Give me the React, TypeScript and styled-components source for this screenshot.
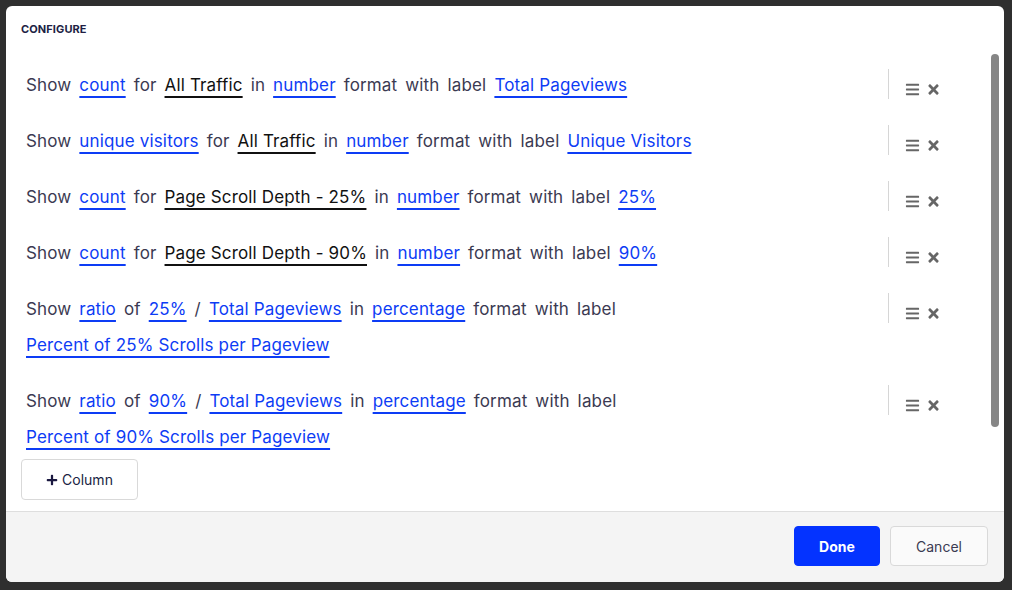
import React from "react";
import styled, { createGlobalStyle } from "styled-components";
import { FaBars, FaTimes, FaPlus } from "react-icons/fa";

const Global = createGlobalStyle`
  html, body { margin: 0; padding: 0; }
  body { font-family: Inter, "Noto Sans", sans-serif; background: #2f2f2f; }
  * { box-sizing: border-box; }
`;

const Backdrop = styled.div`
  width: 1012px;
  height: 590px;
  background: #2f2f2f;
  padding: 6px 8px 8px 6px;
  overflow: hidden;
`;

const Modal = styled.div`
  width: 998px;
  height: 576px;
  background: #ffffff;
  border-radius: 6px;
  display: flex;
  flex-direction: column;
  overflow: hidden;
`;

const Header = styled.div`
  height: 44px;
  padding: 16px 15px 0;
  font-size: 11px;
  line-height: 14px;
  font-weight: 700;
  color: #201e44;
  letter-spacing: 0.1px;
`;

const Body = styled.div`
  flex: 1;
  position: relative;
  padding: 17px 64px 10px 15px;
  display: flex;
  flex-direction: column;
`;

const Scrollbar = styled.div`
  position: absolute;
  right: 5px;
  top: 4px;
  width: 8px;
  height: 373px;
  border-radius: 4px;
  background: #868686;
`;

const List = styled.div`
  display: flex;
  flex-direction: column;
  gap: 20px;
`;

const Row = styled.div`
  display: flex;
  align-items: flex-start;
  padding-left: 5px;
`;

const Sentence = styled.div`
  flex: 1;
  display: flex;
  flex-wrap: wrap;
  column-gap: 8px;
  font-size: 17px;
  letter-spacing: 0.15px;
  line-height: 36px;
  color: #3b3a52;
`;

const Word = styled.span`
  white-space: nowrap;
`;

const Token = styled.span<{ $kind: "link" | "dark" }>`
  white-space: nowrap;
  color: ${(p) => (p.$kind === "link" ? "#0d3cf5" : "#111111")};
  text-decoration: underline;
  text-decoration-thickness: 2px;
  text-underline-offset: 5px;
  text-decoration-skip-ink: none;
`;

const Controls = styled.div`
  width: 52px;
  height: 30px;
  margin-top: 2px;
  display: flex;
  border-left: 1px solid #d6d6d6;
  padding: 13px 0 0 16px;
  gap: 6px;
  color: #666666;
`;

const IconBox = styled.span`
  display: flex;
  align-items: center;
  height: 14px;
`;

const AddButton = styled.button`
  margin-top: 4px;
  width: 117px;
  height: 41px;
  border: 1px solid #d9d9d9;
  border-radius: 4px;
  background: #ffffff;
  display: flex;
  align-items: center;
  justify-content: center;
  gap: 4px;
  font-family: Inter, "Noto Sans", sans-serif;
  font-size: 14px;
  color: #201e44;
  padding: 0;
`;

const Footer = styled.div`
  height: 71px;
  border-top: 1px solid #dedede;
  background: #f4f4f4;
  display: flex;
  justify-content: flex-end;
  align-items: flex-start;
  padding: 14px 16px 0 0;
  gap: 10px;
`;

const Btn = styled.button<{ $primary?: boolean }>`
  height: 40px;
  width: ${(p) => (p.$primary ? "86px" : "98px")};
  border-radius: 4px;
  border: 1px solid ${(p) => (p.$primary ? "#0433ff" : "#d9d9d9")};
  background: ${(p) => (p.$primary ? "#0433ff" : "#fafafa")};
  color: ${(p) => (p.$primary ? "#ffffff" : "#3b3a52")};
  font-family: Inter, "Noto Sans", sans-serif;
  font-weight: ${(p) => (p.$primary ? 700 : 400)};
  font-size: 14px;
  padding: 0;
`;

type Part = string | { t: string; k: "link" | "dark" };
const L = (t: string): Part => ({ t, k: "link" });
const D = (t: string): Part => ({ t, k: "dark" });

const rows: Part[][] = [
  ["Show", L("count"), "for", D("All Traffic"), "in", L("number"), "format", "with", "label", L("Total Pageviews")],
  ["Show", L("unique visitors"), "for", D("All Traffic"), "in", L("number"), "format", "with", "label", L("Unique Visitors")],
  ["Show", L("count"), "for", D("Page Scroll Depth - 25%"), "in", L("number"), "format", "with", "label", L("25%")],
  ["Show", L("count"), "for", D("Page Scroll Depth - 90%"), "in", L("number"), "format", "with", "label", L("90%")],
  ["Show", L("ratio"), "of", L("25%"), "/", L("Total Pageviews"), "in", L("percentage"), "format", "with", "label", L("Percent of 25% Scrolls per Pageview")],
  ["Show", L("ratio"), "of", L("90%"), "/", L("Total Pageviews"), "in", L("percentage"), "format", "with", "label", L("Percent of 90% Scrolls per Pageview")],
];

export default function App() {
  return (
    <>
      <Global />
      <Backdrop>
        <Modal>
          <Header>CONFIGURE</Header>
          <Body>
            <List>
              {rows.map((r, i) => (
                <Row key={i}>
                  <Sentence>
                    {r.map((p, j) =>
                      typeof p === "string" ? (
                        <Word key={j}>{p}</Word>
                      ) : (
                        <Token key={j} $kind={p.k}>
                          {p.t}
                        </Token>
                      )
                    )}
                  </Sentence>
                  <Controls>
                    <IconBox>
                      <FaBars size={15} />
                    </IconBox>
                    <IconBox>
                      <FaTimes size={15} />
                    </IconBox>
                  </Controls>
                </Row>
              ))}
            </List>
            <AddButton>
              <FaPlus size={12} color="#1a1840" />
              Column
            </AddButton>
            <Scrollbar />
          </Body>
          <Footer>
            <Btn $primary>Done</Btn>
            <Btn>Cancel</Btn>
          </Footer>
        </Modal>
      </Backdrop>
    </>
  );
}
